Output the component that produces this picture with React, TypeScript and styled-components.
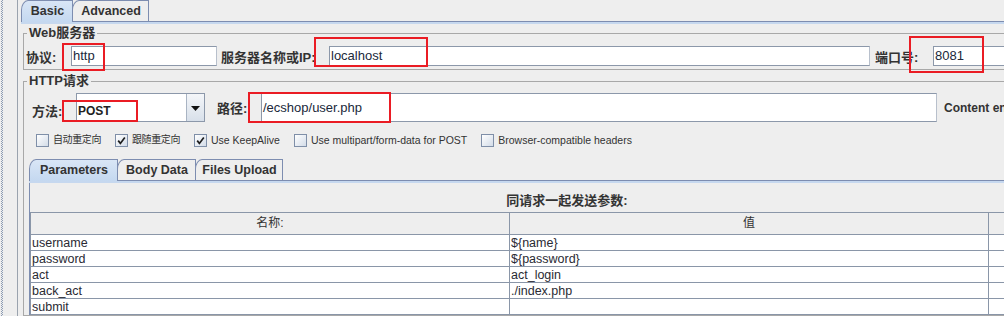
import React from "react";
import styled, { createGlobalStyle } from "styled-components";

const Global = createGlobalStyle`
  html, body { margin: 0; padding: 0; background: #eeeeee; }
  body { font-family: "Liberation Sans", "Noto Sans CJK SC", sans-serif; }
  * { box-sizing: border-box; }
`;

const FONT = `"Liberation Sans", "Noto Sans CJK SC", sans-serif`;

const Page = styled.div`
  position: relative;
  width: 1004px;
  height: 316px;
  overflow: hidden;
  display: flex;
  background: #eeeeee;
  color: #333333;
  font-family: ${FONT};
`;

const Gutter = styled.div`
  width: 21px;
  flex: none;
  display: flex;
  justify-content: space-between;
  padding: 0 3px 0 1px;
`;

const Dots = styled.div`
  width: 2px;
  height: 100%;
  background: conic-gradient(#8d9cb3 25%, transparent 0 50%, #8d9cb3 0 75%, transparent 0) 0 0 / 2px 2px;
`;

const VRule = styled.div`
  width: 1px;
  height: 100%;
  background: #9aa3ae;
`;

const Main = styled.div`
  flex: 1;
  min-width: 0;
  overflow: hidden;
  display: flex;
  flex-direction: column;
`;

const TabStrip = styled.div<{ $pad?: number; $mt?: number }>`
  display: flex;
  align-items: flex-end;
  height: ${(p) => (p.$mt !== undefined ? 21 : 23)}px;
  margin-top: ${(p) => p.$mt ?? 0}px;
  padding-left: ${(p) => p.$pad ?? 0}px;
  position: relative;
  z-index: 1;
`;

const Tab = styled.div<{ $w: number; $active?: boolean }>`
  width: ${(p) => p.$w}px;
  height: ${(p) => (p.$active ? 22 : 21)}px;
  margin-bottom: ${(p) => (p.$active ? -1 : 0)}px;
  margin-right: -1px;
  position: relative;
  z-index: ${(p) => (p.$active ? 2 : 1)};
  border: 1px solid #7d8db0;
  border-bottom: none;
  border-top-left-radius: 7px 10px;
  background: ${(p) =>
    p.$active ? "linear-gradient(#d9e6f6, #c4d8f0)" : "#eeeeee"};
  font-family: ${FONT};
  font-weight: bold;
  font-size: 12.5px;
  line-height: 20px;
  color: #333333;
  text-align: center;
  padding-left: 1px;
`;

const TabBand = styled.div`
  height: 3px;
  border-top: 1px solid #7d8db0;
  background: #c6d8ef;
  flex: none;
`;

const Group = styled.fieldset<{ $mt: number }>`
  margin: ${(p) => p.$mt}px 0 0 2px;
  padding: 0 0 0 1px;
  width: 1010px;
  min-width: 1010px;
  border: 1px solid #a8a8a8;
  flex: none;
`;

const Legend = styled.legend`
  padding: 0 2px;
  margin-left: 2px;
  font-weight: bold;
  font-size: 13px;
  line-height: 14px;
  color: #333333;
  font-family: ${FONT};
`;

const Row = styled.div<{ $pt: number; $pb?: number; $pl?: number }>`
  display: flex;
  align-items: center;
  padding: ${(p) => p.$pt}px 0 ${(p) => p.$pb ?? 0}px ${(p) => p.$pl ?? 0}px;
`;

const Label = styled.div<{ $w: number; $ml?: number; $dy?: number }>`
  width: ${(p) => p.$w}px;
  margin-left: ${(p) => p.$ml ?? 0}px;
  margin-top: ${(p) => p.$dy ?? 0}px;
  flex: none;
  font-weight: bold;
  font-size: 13px;
  color: #333333;
  white-space: nowrap;
`;

const Field = styled.div<{ $w: number; $h: number }>`
  width: ${(p) => p.$w}px;
  height: ${(p) => p.$h}px;
  flex: none;
  background: #ffffff;
  border: 1px solid #8c98aa;
  border-right-color: #b8c0cc;
  font-size: 13px;
  line-height: ${(p) => p.$h - 2}px;
  padding-left: 1px;
  color: #20283a;
  white-space: nowrap;
  overflow: hidden;
`;

const Select = styled.div`
  width: 129px;
  height: 29px;
  flex: none;
  display: flex;
  background: #ffffff;
  border: 1px solid #8c98aa;
`;

const SelectValue = styled.div`
  flex: 1;
  font-weight: bold;
  font-size: 12px;
  line-height: 27px;
  padding: 4px 0 0 1px;
  color: #222222;
`;

const SelectButton = styled.div`
  width: 18px;
  display: flex;
  align-items: center;
  justify-content: center;
  padding-top: 2px;
  border-left: 1px solid #a9b4c3;
  background: linear-gradient(#f4f6f9, #d8e0ea);
`;

const SideLabel = styled.div`
  margin-left: 7px;
  font-weight: bold;
  font-size: 12px;
  color: #333333;
  white-space: nowrap;
`;

const Checks = styled.div`
  display: flex;
  align-items: center;
  height: 16px;
  margin-top: 10px;
  padding-left: 11px;
  gap: 14px;
`;

const CheckItem = styled.div`
  display: flex;
  align-items: center;
  gap: 4px;
  white-space: nowrap;
`;

const Box = styled.div`
  width: 13px;
  height: 13px;
  flex: none;
  border: 1px solid #7f8fa8;
  background: linear-gradient(135deg, #ffffff, #d3dce8);
  display: flex;
  align-items: center;
  justify-content: center;
`;

const CheckText = styled.span<{ $cjk?: boolean }>`
  font-size: ${(p) => (p.$cjk ? 10 : 10.5)}px;
  letter-spacing: ${(p) => (p.$cjk ? -0.4 : 0)}px;
  color: #333333;
  line-height: 14px;
`;

const Inner = styled.div`
  margin-left: 4px;
  display: flex;
  flex-direction: column;
`;

const Pane = styled.div`
  border-left: 1px solid #7d8db0;
`;

const PaneTitle = styled.div`
  margin-top: 10px;
  height: 16px;
  line-height: 16px;
  width: 958px;
  text-align: center;
  font-weight: bold;
  font-size: 13px;
  color: #333333;
  padding-left: 116px;
`;

const Table = styled.div`
  margin-top: 3px;
  display: grid;
  grid-template-columns: 479px 479px 80px;
  border-top: 1px solid #8a96a8;
  border-left: 1px solid #8a96a8;
  width: 1039px;
`;

const Head = styled.div`
  height: 22px;
  border-right: 1px solid #8a96a8;
  border-bottom: 1px solid #8a96a8;
  background: #eeeeee;
  text-align: center;
  font-size: 12px;
  line-height: 21px;
  color: #333333;
  white-space: nowrap;
  overflow: hidden;
`;

const Cell = styled.div`
  height: 16px;
  border-right: 1px solid #8a96a8;
  border-bottom: 1px solid #8a96a8;
  background: #ffffff;
  font-size: 12.5px;
  line-height: 16px;
  padding-left: 1px;
  color: #2a2a33;
  white-space: nowrap;
  overflow: hidden;
`;

const Mark = styled.div<{ $x: number; $y: number; $w: number; $h: number }>`
  position: absolute;
  left: ${(p) => p.$x}px;
  top: ${(p) => p.$y}px;
  width: ${(p) => p.$w}px;
  height: ${(p) => p.$h}px;
  border: 2px solid #ea1c24;
  pointer-events: none;
  z-index: 5;
`;

const marks = [
  { x: 62, y: 43, w: 43, h: 28 },
  { x: 314, y: 37, w: 114, h: 30 },
  { x: 909, y: 36, w: 75, h: 37 },
  { x: 62, y: 100, w: 76, h: 22 },
  { x: 248, y: 92, w: 143, h: 31 },
];

const checks: { text: string; on: boolean; cjk?: boolean }[] = [
  { text: "自动重定向", on: false, cjk: true },
  { text: "跟随重定向", on: true, cjk: true },
  { text: "Use KeepAlive", on: true },
  { text: "Use multipart/form-data for POST", on: false },
  { text: "Browser-compatible headers", on: false },
];

const params = [
  ["username", "${name}"],
  ["password", "${password}"],
  ["act", "act_login"],
  ["back_act", "./index.php"],
  ["submit", ""],
];

const Check = () => (
  <svg width="9" height="9" viewBox="0 0 9 9">
    <path d="M1.2 4.6 L3.4 7.4 L7.8 1.4" stroke="#1e1e1e" strokeWidth="1.7" fill="none" />
  </svg>
);

const Arrow = () => (
  <svg width="9" height="5" viewBox="0 0 9 5">
    <path d="M0 0 H9 L4.5 5 Z" fill="#111111" />
  </svg>
);

export default function App() {
  return (
    <>
      <Global />
      <Page>
        <Gutter>
          <Dots />
          <VRule />
        </Gutter>
        <Main>
          <TabStrip>
            <Tab $w={52} $active>Basic</Tab>
            <Tab $w={77}>Advanced</Tab>
          </TabStrip>
          <TabBand />

          <Group $mt={2}>
            <Legend>Web服务器</Legend>
            <Row $pt={6} $pb={3} $pl={1}>
              <Label $w={45}>协议:</Label>
              <Field $w={146} $h={20}>http</Field>
              <Label $w={108} $ml={4}>服务器名称或IP:</Label>
              <Field $w={541} $h={20}>localhost</Field>
              <Label $w={58} $ml={5}>端口号:</Label>
              <Field $w={100} $h={20}>8081</Field>
            </Row>
          </Group>

          <Group $mt={4}>
            <Legend>HTTP请求</Legend>
            <Row $pt={5} $pl={7}>
              <Label $w={44} $dy={6}>方法:</Label>
              <Select>
                <SelectValue>POST</SelectValue>
                <SelectButton>
                  <Arrow />
                </SelectButton>
              </Select>
              <Label $w={44} $ml={12}>路径:</Label>
              <Field $w={676} $h={29}>/ecshop/user.php</Field>
              <SideLabel>Content encoding:</SideLabel>
            </Row>
            <Checks>
              {checks.map((c) => (
                <CheckItem key={c.text}>
                  <Box>{c.on && <Check />}</Box>
                  <CheckText $cjk={c.cjk}>{c.text}</CheckText>
                </CheckItem>
              ))}
            </Checks>
            <Inner>
              <TabStrip $mt={11} $pad={0}>
                <Tab $w={89} $active>Parameters</Tab>
                <Tab $w={79}>Body Data</Tab>
                <Tab $w={88}>Files Upload</Tab>
              </TabStrip>
              <TabBand />
              <Pane>
                <PaneTitle>同请求一起发送参数:</PaneTitle>
                <Table>
                  <Head>名称:</Head>
                  <Head>值</Head>
                  <Head>编码?</Head>
                  {params.map(([k, v]) => (
                    <React.Fragment key={k}>
                      <Cell>{k}</Cell>
                      <Cell>{v}</Cell>
                      <Cell />
                    </React.Fragment>
                  ))}
                </Table>
              </Pane>
            </Inner>
          </Group>
        </Main>
        {marks.map((m, i) => (
          <Mark key={i} $x={m.x} $y={m.y} $w={m.w} $h={m.h} />
        ))}
      </Page>
    </>
  );
}
